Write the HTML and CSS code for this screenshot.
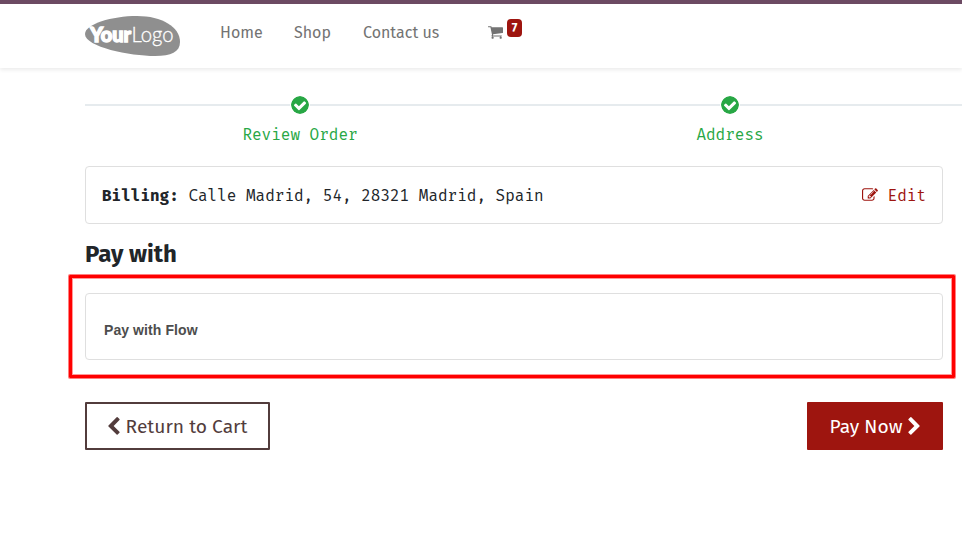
FILE: index.html
```html
<!DOCTYPE html>
<html lang="en">
<head>
<meta charset="utf-8">
<title>Payment</title>
<link rel="stylesheet" href="styles.css">
</head>
<body>
<header class="header">
  <svg class="logo" viewBox="0 0 96 42" role="img">
    <path class="logo-shape" d="M0 19C0 9 27 1 52 1C77 1 95 12 95 27C95 37 86 41 70 41C45 41 0 32 0 19Z"/>
    <text class="logo-bold" x="5" y="26.500" textLength="41" lengthAdjust="spacingAndGlyphs">Your</text>
    <text class="logo-light" x="46.500" y="26.500" textLength="42" lengthAdjust="spacingAndGlyphs">Logo</text>
  </svg>
  <nav class="nav">
    <a class="nav-home">Home</a>
    <a class="nav-shop">Shop</a>
    <a class="nav-contact">Contact us</a>
  </nav>
  <a class="cart">
    <svg class="cart-icon" viewBox="0 256 1664 1408"><path d="M640 1536q0 52-38 90t-90 38-90-38-38-90 38-90 90-38 90 38 38 90zm896 0q0 52-38 90t-90 38-90-38-38-90 38-90 90-38 90 38 38 90zm128-1088v512q0 24-16.500 42.500t-40.500 21.500l-1044 122q13 60 13 70 0 16-24 64h920q26 0 45 19t19 45-19 45-45 19h-1024q-26 0-45-19t-19-45q0-11 8-31.500t16-36 21.500-40 15.500-29.500l-177-823h-204q-26 0-45-19t-19-45 19-45 45-19h256q16 0 28.500 6.500t19.500 15.500 13 24.500 8 26 5.500 29.500 4.500 26h1201q26 0 45 19t19 45z"/></svg>
    <span class="badge">7</span>
  </a>
</header>
<main class="main">
  <div class="steps">
    <div class="step">
      <div class="track"><svg class="check" viewBox="128 128 1536 1536"><path d="M1412 734q0-28-18-46l-91-90q-19-19-45-19t-45 19l-408 407-226-226q-19-19-45-19t-45 19l-91 90q-18 18-18 46 0 27 18 45l362 362q19 19 45 19 27 0 46-19l543-543q18-18 18-45zm252 162q0 209-103 385.500t-279.500 279.500-385.500 103-385.500-103-279.500-279.500-103-385.500 103-385.500 279.500-279.500 385.500-103 385.500 103 279.500 279.500 103 385.500z"/></svg></div>
      <span class="mono">Review Order</span>
    </div>
    <div class="step">
      <div class="track"><svg class="check" viewBox="128 128 1536 1536"><path d="M1412 734q0-28-18-46l-91-90q-19-19-45-19t-45 19l-408 407-226-226q-19-19-45-19t-45 19l-91 90q-18 18-18 46 0 27 18 45l362 362q19 19 45 19 27 0 46-19l543-543q18-18 18-45zm252 162q0 209-103 385.500t-279.500 279.500-385.500 103-385.500-103-279.500-279.500-103-385.500 103-385.500 279.500-279.500 385.500-103 385.500 103 279.500 279.500 103 385.500z"/></svg></div>
      <span class="mono">Address</span>
    </div>
    <div class="step"><div class="track"></div></div>
  </div>
  <section class="card billing mono">
    <div><b>Billing:</b> Calle Madrid, 54, 28321 Madrid, Spain</div>
    <a class="edit"><svg class="edit-icon" viewBox="0 128 1792 1408"><path d="M888 1184l116-116-152-152-116 116v56h96v96h56zm440-720q-16-16-33 1l-350 350q-17 17-1 33t33-1l350-350q17-17 1-33zm80 594v190q0 119-84.500 203.500t-203.500 84.500h-832q-119 0-203.500-84.500t-84.500-203.500v-832q0-119 84.500-203.500t203.500-84.500h832q63 0 117 25 15 7 18 23 3 17-9 29l-49 49q-14 14-32 8-23-6-45-6h-832q-66 0-113 47t-47 113v832q0 66 47 113t113 47h832q66 0 113-47t47-113v-126q0-13 9-22l64-64q15-15 35-7t20 29zm-96-738l288 288-672 672h-288v-288zm444 132l-92 92-288-288 92-92q28-28 68-28t68 28l152 152q28 28 28 68t-28 68z"/></svg>Edit</a>
  </section>
  <h3 class="title">Pay with</h3>
  <div class="highlight">
    <div class="card method">Pay with Flow</div>
  </div>
  <div class="actions">
    <a class="btn btn-outline"><svg class="chev" viewBox="400 20 1060 1640"><path d="M1427 301l-531 531 531 531q19 19 19 45t-19 45l-166 166q-19 19-45 19t-45-19l-742-742q-19-19-19-45t19-45l742-742q19-19 45-19t45 19l166 166q19 19 19 45t-19 45z"/></svg><span>Return to Cart</span></a>
    <a class="btn btn-primary"><span>Pay Now</span><svg class="chev chev-right" viewBox="400 20 1060 1640"><path d="M1427 301l-531 531 531 531q19 19 19 45t-19 45l-166 166q-19 19-45 19t-45-19l-742-742q-19-19-19-45t19-45l742-742q19-19 45-19t45 19l166 166q19 19 19 45t-19 45z"/></svg></a>
  </div>
</main>
</body>
</html>
```
FILE: styles.css
```css
* { box-sizing: border-box; }
body {
  margin: 0;
  height: 538px;
  overflow: hidden;
  background: #fff;
  color: #212529;
  font: 16px/24px "Fira Sans", "Open Sans", sans-serif;
}
svg { display: block; fill: currentColor; flex: none; }
.header {
  display: flex;
  height: 68px;
  padding-left: 85px;
  border-top: 4px solid #6c4a63;
  box-shadow: 0 2px 4px rgba(0, 0, 0, .08);
}
.logo { width: 96px; height: 42px; margin-top: 11px; }
.logo-shape { fill: #8f8f8f; }
.logo-bold { font: 900 20px Lato, sans-serif; fill: #fff; stroke: #fff; stroke-width: 1.400px; }
.logo-light { font: 300 21px Lato, sans-serif; fill: #fff; stroke: #fff; stroke-width: .3px; }
.nav { display: flex; margin: 17px 0 0 39px; color: #737373; white-space: nowrap; }
.nav-home { width: 74px; }
.nav-shop { width: 69px; }
.nav-contact { width: 125px; }
.cart { display: flex; color: #737373; }
.cart-icon { width: 15px; height: 13px; margin-top: 22px; }
.badge {
  width: 15px;
  height: 18px;
  margin: 15px 0 0 4px;
  border-radius: 4px;
  background: #9e150f;
  color: #fff;
  font-size: 12px;
  font-weight: 700;
  line-height: 18px;
  text-align: center;
}
.main { width: 943px; padding: 27px 0 0 85px; }
.steps { display: flex; width: 877px; height: 71px; overflow: hidden; }
.step { flex: 0 0 430px; color: #28a745; text-align: center; }
.track {
  display: flex;
  justify-content: center;
  align-items: center;
  height: 20px;
  margin-bottom: 8px;
  background: linear-gradient(#e6ebee, #e6ebee) 0 50% / 100% 2px no-repeat;
}
.check { width: 20px; height: 20px; border: 1px solid #fff; border-radius: 50%; background: #fff; }
.mono {
  font-family: "Fira Mono", "DejaVu Sans Mono", monospace;
  font-size: 16px;
}
.card { border: 1px solid #dfdfdf; border-radius: 4px; background: #fff; }
.billing {
  display: flex;
  justify-content: space-between;
  align-items: center;
  height: 58px;
  padding: 2px 16px 0;
}
.edit { display: flex; align-items: center; color: #9e150f; }
.edit-icon { width: 16px; height: 13px; margin: -3px 10px 0 0; }
.title { margin: 15px 0 6px; font-size: 24px; line-height: 30px; }
.highlight {
  width: 886px;
  height: 103px;
  margin-left: -16px;
  padding: 15px 9px 0 13px;
  border: 3px solid #f00;
  border-radius: 1px;
  box-shadow: 0 0 0 1px rgba(255, 0, 0, .5), inset 0 0 0 1px rgba(255, 0, 0, .4);
}
.method {
  height: 67px;
  padding: 24px 18px;
  color: #4d4d4d;
  font: bold 14px/24px "Liberation Sans", sans-serif;
  letter-spacing: .08px;
}
.actions { display: flex; justify-content: space-between; margin-top: 24px; }
.btn {
  display: flex;
  align-items: center;
  justify-content: center;
  gap: 6px;
  height: 48px;
  border: 2px solid;
  border-radius: 1px;
  font-size: 19.200px;
  white-space: nowrap;
}
.btn span { padding-top: 1px; }
.btn-outline { width: 185px; border-color: #523c3c; color: #523c3c; }
.btn-primary { width: 136px; gap: 6px; border-color: #9e150f; background: #9e150f; color: #fff; }
.chev { width: 12px; height: 18px; }
.chev-right { transform: scaleX(-1); }
```
